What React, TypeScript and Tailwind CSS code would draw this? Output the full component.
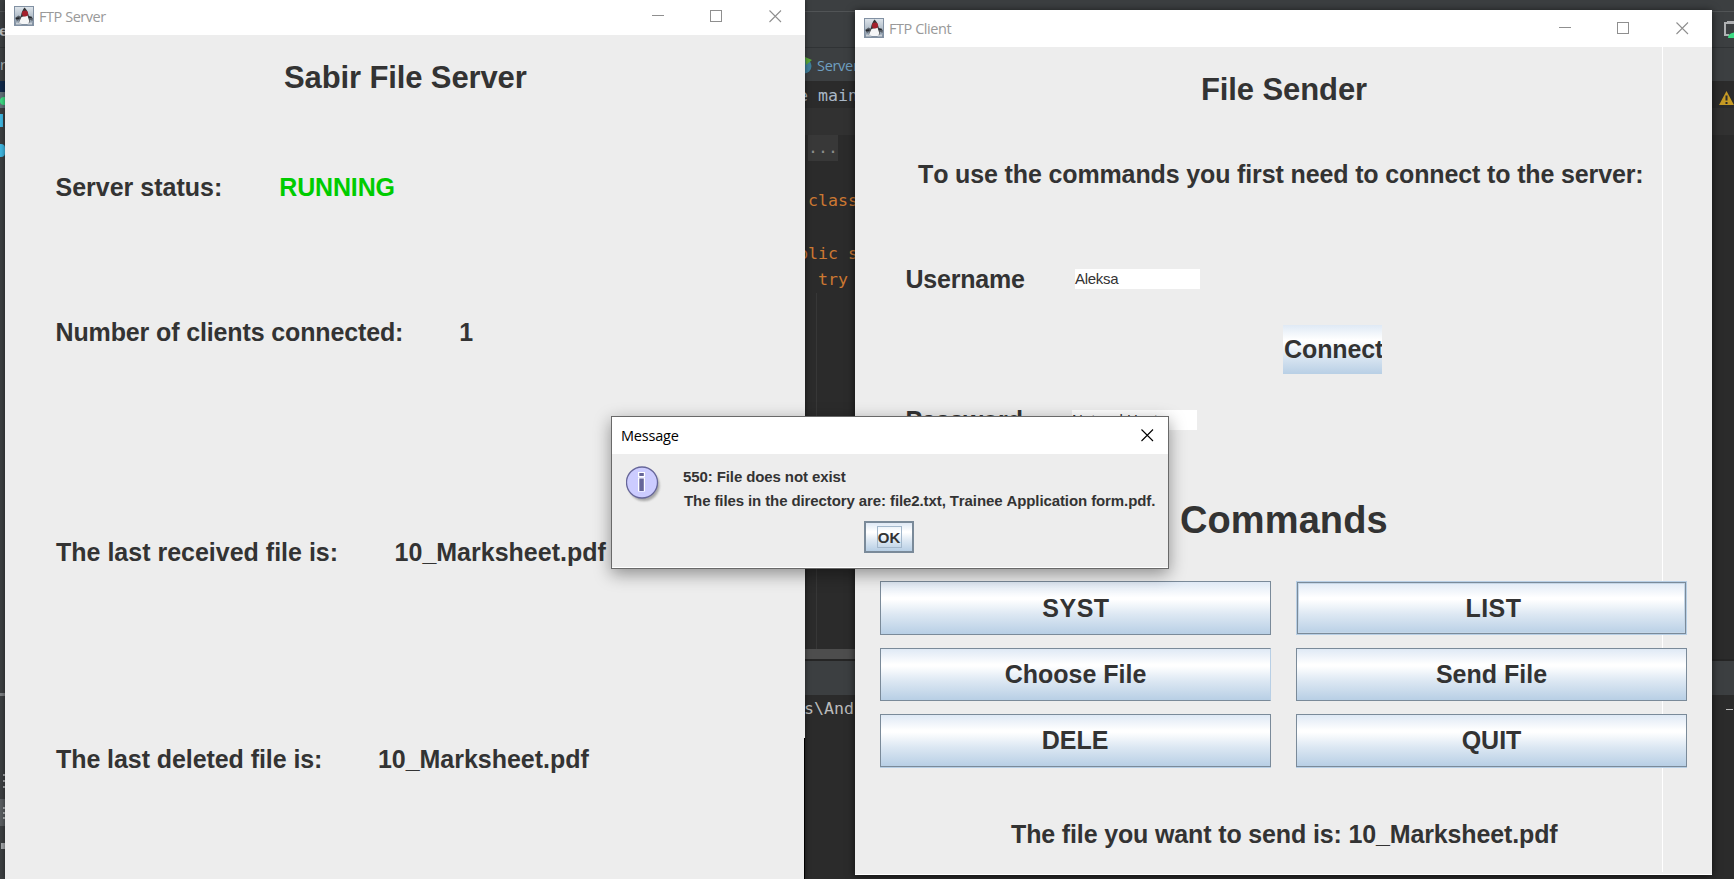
import type { ReactNode } from "react";

const JAVA = "font-['Liberation_Sans',Arial,sans-serif] font-bold text-[#333333] [font-kerning:none]";
const BODY = JAVA + " text-[25px] leading-[30px] whitespace-pre";
const GRADIENT = "bg-[linear-gradient(180deg,#dfe9f5_0%,#ffffff_30%,#ffffff_34%,#dde8f3_62%,#b8cfe5_100%)]";

function JavaIcon() {
  return (
    <svg className="size-5 shrink-0" viewBox="0 0 20 20">
      <defs>
        <linearGradient id="sky" x1="0" y1="0" x2="0" y2="1">
          <stop offset="0" stopColor="#dfe6ec" />
          <stop offset="0.5" stopColor="#b5c0cb" />
          <stop offset="1" stopColor="#7b8b9c" />
        </linearGradient>
      </defs>
      <rect x="0.5" y="0.5" width="19" height="19" fill="url(#sky)" stroke="#8291a3" />
      <path d="M1 12 4.500 9.500l3 1.500 7-1 4.500 2-.5 3-3-1.500-1 1 1.500 3H4L6 13.500 3 15Z" fill="#596069" />
      <path d="M10.500 1.500C9 3.500 7.500 6 7 9.500l-1.500 6 2 2h7l1.500-1.500-1.300-6.500C14 6 12.500 3 10.500 1.500Z" fill="#343638" />
      <path d="M7.500 11 13.500 9.500l1.900 6-1.400 2.500H7.500l-2.500-1.500Z" fill="#f5f6f7" />
      <path d="M2 16.500h4.500l1 2H2ZM14 16.500h4v2h-4.500Z" fill="#d9dee3" opacity="0.8" />
      <circle cx="11" cy="7.500" r="3" fill="#a3202c" />
      <path d="M2 12.500 5.500 12M14.800 11l3 .6" stroke="#23262a" strokeWidth="1.500" />
    </svg>
  );
}

function CloseGlyph({ color }: { color: string }) {
  return (
    <svg className="size-[13px]" viewBox="0 0 13 13">
      <path d="M.5.5l11.500 11.500M12 .5l-11.500 11.500" stroke={color} strokeWidth="1.100" fill="none" />
    </svg>
  );
}

function TitleBar({ title, className }: { title: string; className: string }) {
  return (
    <div className={"flex shrink-0 items-start bg-white " + className}>
      <JavaIcon />
      <span className="ml-[5px] font-['Open_Sans','Noto_Sans',sans-serif] text-[14.500px] leading-[21px] tracking-[-0.450px] text-[#999999]">
        {title}
      </span>
      <div className="mt-1 ml-auto flex">
        <svg className="h-[13px] w-[13px]" viewBox="0 0 13 13">
          <path d="M0 5.500h12" stroke="#8f8f8f" />
        </svg>
        <svg className="ml-[45px] h-[13px] w-[13px]" viewBox="0 0 13 13">
          <rect x="0.500" y="0.500" width="11" height="11" stroke="#8f8f8f" fill="none" />
        </svg>
        <div className="ml-[46px]">
          <CloseGlyph color="#8f8f8f" />
        </div>
      </div>
    </div>
  );
}

function StatusRow({ label, children, className }: { label: string; children: ReactNode; className: string }) {
  return (
    <div className={"flex h-[30px] " + BODY + " " + className}>
      {label}
      {children}
    </div>
  );
}

function ServerWindow() {
  return (
    <section className="absolute top-0 left-[5px] flex h-[879px] w-[800px] flex-col bg-[#ededed] shadow-[0_0_5px_rgba(0,0,0,0.5)]">
      <TitleBar title="FTP Server" className="h-[35px] pt-[6px] pr-[23px] pl-[9px]" />
      <h1 className={JAVA + " mt-[24px] pl-[279px] text-[31px] leading-[38px] tracking-[-0.120px] whitespace-pre"}>
        Sabir File Server
      </h1>
      <StatusRow label="Server status:" className="mt-[75px] pl-[50.500px]">
        <span className="ml-[57px] tracking-[-0.150px] text-[#00cc00]">RUNNING</span>
      </StatusRow>
      <StatusRow label="Number of clients connected:" className="mt-[115px] pl-[50.500px] tracking-[-0.130px]">
        <span className="ml-[56px]">1</span>
      </StatusRow>
      <StatusRow label="The last received file is:" className="mt-[190px] pl-[51px]">
        <span className="ml-[56.500px]">10_Marksheet.pdf</span>
      </StatusRow>
      <StatusRow label="The last deleted file is:" className="mt-[177px] pl-[51px] tracking-[-0.070px]">
        <span className="ml-[55.500px] tracking-[-0.020px]">10_Marksheet.pdf</span>
      </StatusRow>
      <div className="absolute right-0 bottom-0 h-[141px] w-px bg-black" />
    </section>
  );
}

function MetalButton({ label, className }: { label: string; className: string }) {
  return (
    <button
      className={JAVA + " " + GRADIENT + " flex items-center justify-center border text-[25px] leading-[30px] " + className}
    >
      {label}
    </button>
  );
}

function ClientWindow() {
  return (
    <section className="absolute top-[10px] left-[855px] flex h-[865px] w-[857px] flex-col border-b border-white bg-[#ededed] shadow-[0_1px_8px_rgba(0,0,0,0.65)]">
      <div className="absolute top-[37px] right-[49px] bottom-[2px] w-px bg-white" />
      <TitleBar title="FTP Client" className="h-[37px] pt-[8px] pr-[23px] pl-[9px]" />
      <h1 className={JAVA + " mt-[24px] pl-[346px] text-[31px] leading-[38px] tracking-[-0.100px] whitespace-pre"}>
        File Sender
      </h1>
      <p className={BODY + " mt-[50px] pl-[63px] tracking-[-0.132px]"}>
        To use the commands you first need to connect to the server:
      </p>
      <div className="mt-[75px] flex h-[171px] pl-[50px]">
        <div className="flex w-[378px] flex-col justify-between">
          <label className="flex h-[30px] items-center">
            <span className={BODY + " w-[170px] pl-[0.500px] tracking-[-0.200px]"}>Username</span>
            <span className="flex h-5 w-[125px] items-center bg-white pt-px font-['Liberation_Sans',Arial,sans-serif] text-[15px] tracking-[-0.300px] text-[#333]">
              Aleksa
            </span>
          </label>
          <label className="flex h-[30px] items-center">
            <span className={BODY + " w-[167px] pl-[0.500px] tracking-[-0.100px]"}>Password</span>
            <span className="flex h-5 w-[125px] items-center bg-white pt-px font-['Liberation_Sans',Arial,sans-serif] text-[15px] text-[#333]">
              NetworkHost
            </span>
          </label>
        </div>
        <button
          className={BODY + " " + GRADIENT + " mt-[61px] flex h-[49px] w-[99px] items-center overflow-hidden pb-px pl-px tracking-[-0.100px]"}
        >
          Connect
        </button>
      </div>
      <h2 className={JAVA + " mt-[62px] pl-[325px] text-[38px] leading-[46px] tracking-[0.100px]"}>Commands</h2>
      <div className="relative mt-[38px] ml-[25px] grid w-[807px] grid-cols-2 gap-x-[25px] gap-y-[13px]">
        <MetalButton label="SYST" className="h-[54px] border-[#7a8a99] pl-px tracking-[0.5px]" />
        <MetalButton
          label="LIST"
          className="h-[54px] border-[#b8cfe5] pl-[4px] tracking-[0.5px] shadow-[inset_0_0_0_1px_#7a8a99,inset_0_0_0_2px_#c5d7e8]"
        />
        <MetalButton label="Choose File" className="h-[53px] border-[#7a8a99] border-r-[#b8cfe5] pb-[2px]" />
        <MetalButton label="Send File" className="h-[53px] border-[#7a8a99] pb-[2px]" />
        <MetalButton label="DELE" className="h-[53px] border-[#7a8a99] pr-px pb-[2px] shadow-[0_1px_#b8cfe5]" />
        <MetalButton label="QUIT" className="h-[53px] border-[#7a8a99] pb-[2px] shadow-[0_1px_#b8cfe5]" />
      </div>
      <p className={BODY + " mt-[52px] pl-[156px] tracking-[-0.140px]"}>The file you want to send is: 10_Marksheet.pdf</p>
    </section>
  );
}

function InfoIcon() {
  return (
    <svg className="h-[38px] w-[38px]" viewBox="0 0 38 38">
      <defs>
        <filter id="soft" x="-20%" y="-20%" width="150%" height="150%">
          <feGaussianBlur stdDeviation="1.300" />
        </filter>
      </defs>
      <circle cx="18" cy="19.500" r="15.500" fill="#888" opacity="0.7" filter="url(#soft)" />
      <circle cx="16" cy="16.500" r="15.500" fill="#ccccff" stroke="#666699" strokeWidth="1.300" />
      <path d="M12 6h7v5h-7zM12 11.500h7v14h-7z" fill="#ffffff" />
      <path d="M13.300 7h4.500v3h-4.500zM13.300 12.500h4.500v12.500h-4.500z" fill="#666699" />
    </svg>
  );
}

function MessageDialog() {
  return (
    <section className="absolute top-[416px] left-[611px] flex h-[153px] w-[558px] flex-col border border-[#696969] bg-[#ededed] shadow-[0_5px_16px_rgba(0,0,0,0.4)]">
      <header className="flex h-[37px] shrink-0 items-center justify-between bg-white pr-[14px] pl-[9px]">
        <span className="font-['Open_Sans','Noto_Sans',sans-serif] text-[14.500px] tracking-[-0.200px] text-black">Message</span>
        <CloseGlyph color="#000000" />
      </header>
      <div className="flex h-[67px] pt-[12px] pl-[14px]">
        <InfoIcon />
        <div className={JAVA + " ml-[19px] text-[15px] leading-6 tracking-[-0.1px] whitespace-pre"}>
          <p className="-mt-px">550: File does not exist</p>
          <p className="ml-px">The files in the directory are: file2.txt, Trainee Application form.pdf.</p>
        </div>
      </div>
      <button
        className={JAVA + " " + GRADIENT + " ml-[252px] flex h-[32px] w-[50px] items-center justify-center border-2 border-[#7a8a99] text-[15px]"}
      >
        <span className="flex h-[22px] w-[25px] items-center justify-center border border-[#a3b8cc] pt-[3px]">OK</span>
      </button>
      <div className="mt-auto h-px bg-white" />
    </section>
  );
}

const MONO = "font-['DejaVu_Sans_Mono',monospace] text-[16.600px] whitespace-pre";

function Ide() {
  return (
    <div className="flex h-[879px] w-[1734px] flex-col overflow-hidden bg-[#2b2b2b]">
      <div className="h-[12px] shrink-0 border-b border-[#515456] bg-[#3c3f41]" />
      <div className="flex h-[36px] shrink-0 items-center justify-between border-b border-[#303335] bg-[#3c3f41] font-['Open_Sans',sans-serif] text-[15px] font-bold text-[#bbbbbb]">
        <span className="-ml-[1px] mt-[2px]">e</span>
        <svg className="h-[18px] w-[11px]" viewBox="0 0 11 18">
          <path d="M11 2H2v12h4" fill="none" stroke="#afb1b3" strokeWidth="2" />
          <path d="M4 1h7" stroke="#afb1b3" strokeWidth="2" />
          <path d="M5 17c0-3 2-5 6-5.500V17Z" fill="#3ddc84" />
        </svg>
      </div>
      <div className="flex h-[33px] shrink-0 items-center bg-[#3c3f41] font-['Open_Sans','Noto_Sans',sans-serif] text-[14.500px]">
        <span className="w-[5px] pt-px text-[#a9b0b5]">r</span>
        <svg className="ml-[796px] h-[18px] w-[12px]" viewBox="0 0 12 18">
          <circle cx="3" cy="10" r="7.500" fill="#3f7f9b" />
          <path d="M4 1l7 3-6 5Z" fill="#59a839" />
        </svg>
        <span className="mt-[2px] ml-[4px] tracking-[-0.3px] text-[#6f9fc0]">Server</span>
      </div>
      <div className={"flex h-[27px] shrink-0 items-center bg-[#2b2b2b] text-[#a9b7c6] " + MONO}>
        <div className="flex h-full w-[5px] flex-col justify-end bg-[#10294a]">
          <div className="h-[16px] bg-[#607078] pt-[5px]">
            <div className="h-[8px] rounded-l-full bg-[#3ddc84]" />
          </div>
        </div>
        <span className="mt-1 ml-[793px]">e main</span>
        <svg className="mt-[8px] ml-[861px] h-[15px] w-[15px]" viewBox="0 0 15 15">
          <path d="M7.500 0 15 14H0Z" fill="#c69a24" />
          <path d="M7.500 4.500v5M7.500 11v2" stroke="#2b2b2b" strokeWidth="2" />
        </svg>
      </div>
      <div className="flex h-[27px] shrink-0 bg-[#313131]">
        <div className="w-[5px] bg-[#3c3f41] pt-[6px]">
          <div className="h-[13px] w-[3px] bg-[#40b6e0]" />
        </div>
      </div>
      <div className={"flex h-[514px] shrink-0 text-[#cc7832] " + MONO}>
        <div className="w-[5px] bg-[#3c3f41] pt-[9px]">
          <div className="h-[13px] rounded-r bg-[#40b6e0]" />
        </div>
        <div className="flex w-[850px] flex-col pl-[793px]">
          <div className="ml-[10px] h-[26px] w-[30px] bg-[#383838] leading-[26px] text-[#8c8c8c]">...</div>
          <div className="mt-[27px] ml-[10px] leading-[26px]">class</div>
          <div className="mt-[27px] leading-[26px]">blic s</div>
          <div className="ml-[20px] leading-[26px]">try</div>
          <div className="ml-[18px] grow border-l border-[#373737]" />
        </div>
      </div>
      <div className="flex h-[10px] shrink-0">
        <div className="w-[5px] bg-[#3c3f41]" />
        <div className="w-[850px] bg-[#4d4d4d]" />
      </div>
      <div className="flex grow">
        <div className="flex w-[5px] flex-col bg-[#3c3f41] pt-[34px]">
          <div className="h-[3px] bg-[#7b7e80]" />
          <div className="mt-[78px] ml-[2px] flex flex-col items-center gap-[4px]">
            <div className="size-[2px] bg-[#a5a8aa]" />
            <div className="size-[2px] bg-[#a5a8aa]" />
            <div className="size-[2px] bg-[#a5a8aa]" />
          </div>
          <div className="mt-[11px] flex h-[27px] flex-col items-center justify-center gap-[3px] bg-[#5a5e61] pl-[2px]">
            <div className="size-[2px] bg-[#b5b8ba]" />
            <div className="size-[2px] bg-[#b5b8ba]" />
            <div className="size-[2px] bg-[#b5b8ba]" />
          </div>
          <div className="mt-[17px] ml-px h-[6px] bg-[#a5a8aa]" />
        </div>
        <div className={"flex grow flex-col text-[#bbbbbb] " + MONO}>
          <div className="h-[2px] bg-[#252525]" />
          <div className="h-[34px] bg-[#3c3f41]" />
          <div className="flex justify-between pr-px pl-[799px] leading-[28px]">
            <span>s\And</span>
            <span className="mt-[14px] h-px w-[7px] bg-[#bbbbbb]" />
          </div>
        </div>
      </div>
    </div>
  );
}

export default function App() {
  return (
    <main className="relative h-[879px] w-[1734px] overflow-hidden">
      <Ide />
      <ServerWindow />
      <ClientWindow />
      <MessageDialog />
    </main>
  );
}
